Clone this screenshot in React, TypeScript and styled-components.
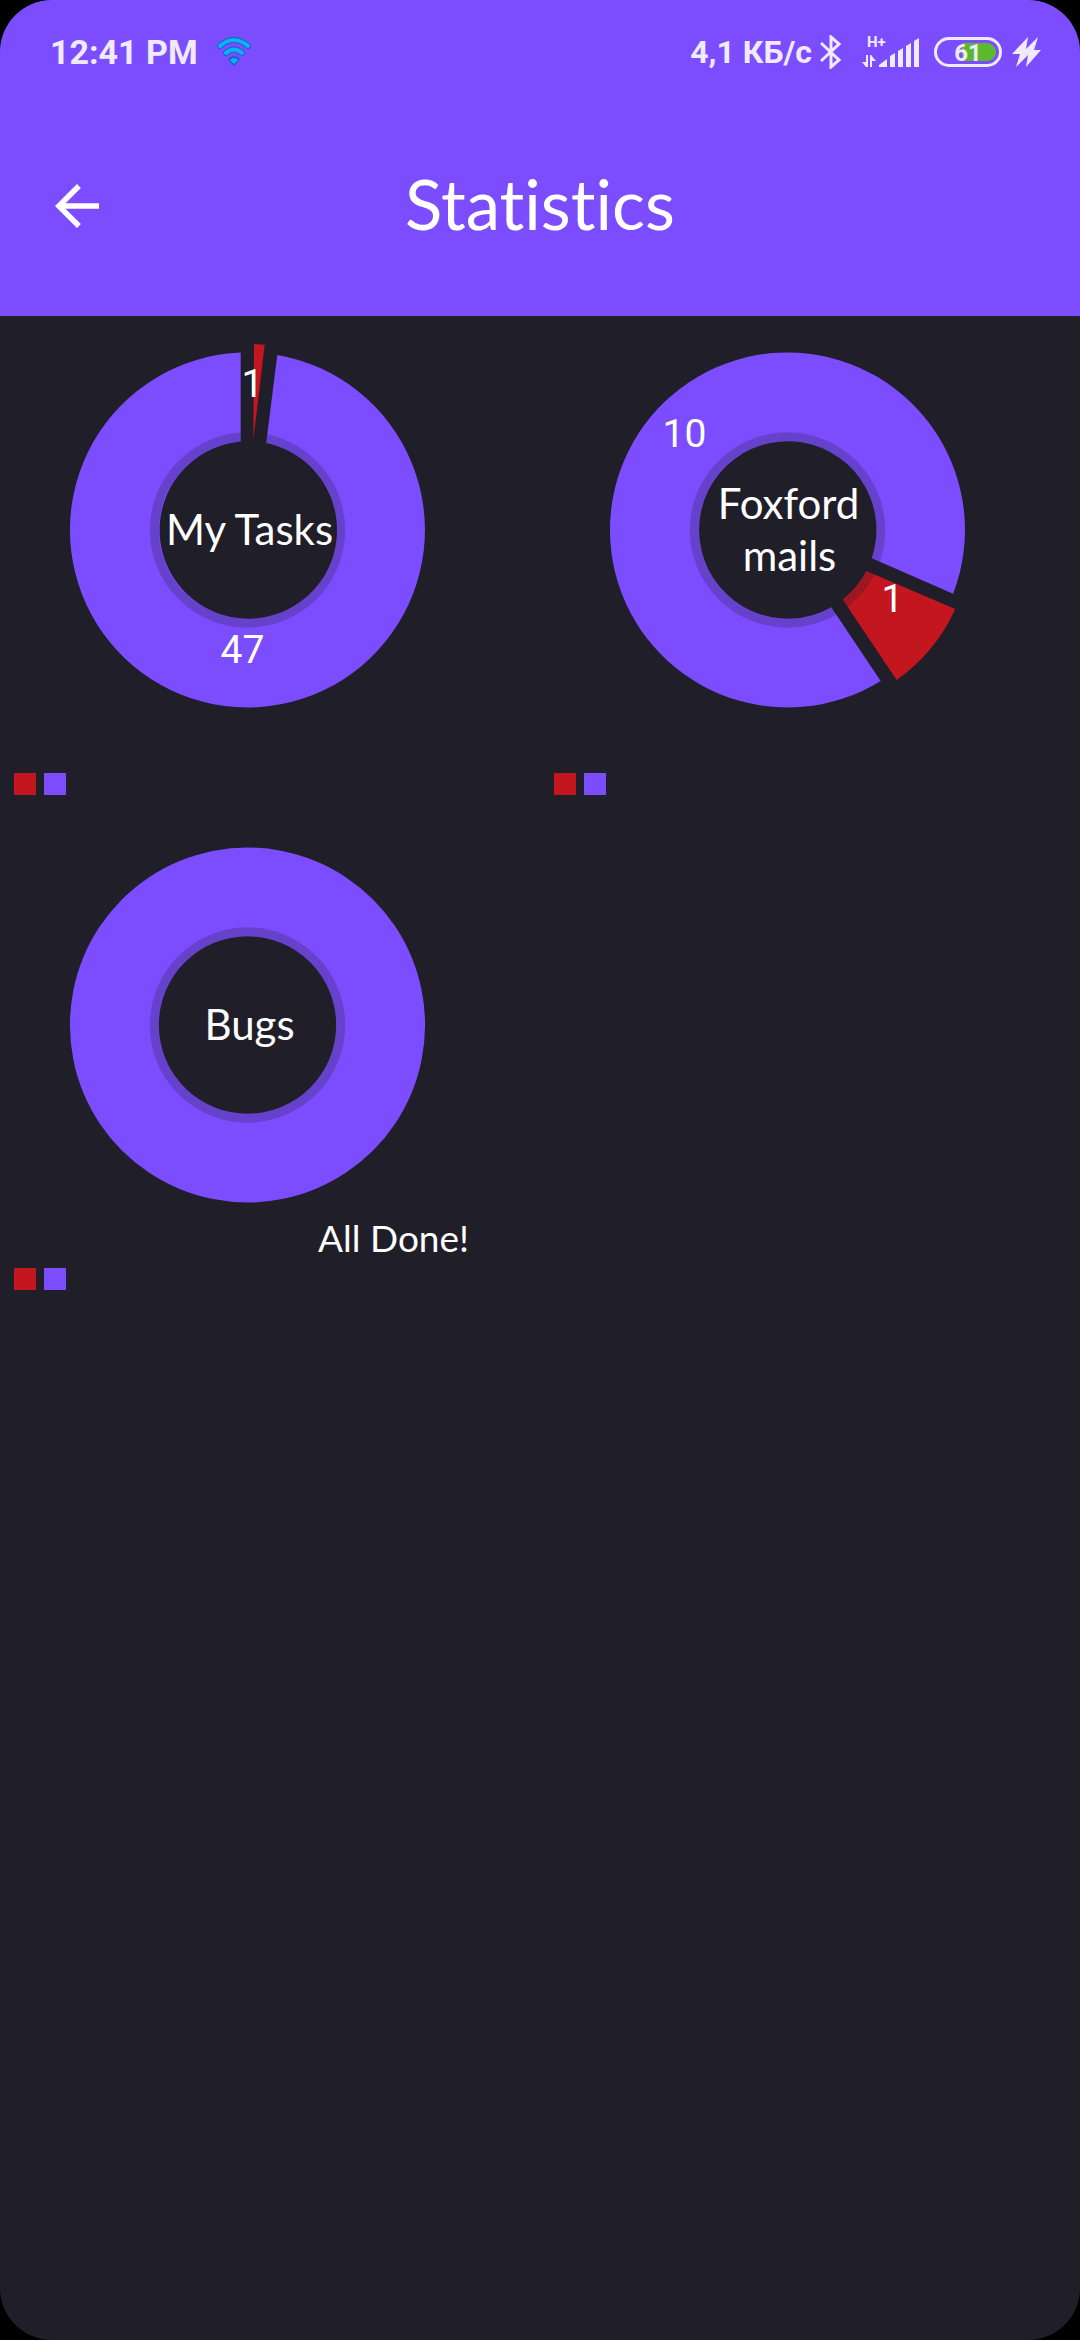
import React from "react";
import styled, { createGlobalStyle } from "styled-components";

const color = {
  accent: "#7c4dff",
  danger: "#c3161f",
  surface: "#201e28",
  text: "#ffffff",
  status: "#f0eaff",
};

const GlobalStyle = createGlobalStyle`
  *, *::before, *::after { box-sizing: border-box; }
  body {
    margin: 0;
    background: #000000;
    font-family: Lato, "Noto Sans", sans-serif;
    font-variant-ligatures: none;
    color: ${color.text};
  }
`;

const Screen = styled.div`
  display: flex;
  flex-direction: column;
  min-height: 100vh;
  border-radius: 52px;
  overflow: hidden;
  background: ${color.surface};
`;

const Header = styled.header`
  background: ${color.accent};
`;

const StatusBar = styled.div`
  display: flex;
  align-items: center;
  justify-content: space-between;
  height: 96px;
  padding: 8px 38px 0 50px;
  color: ${color.status};
  font-family: Roboto, sans-serif;
  font-weight: 700;
`;

const StatusGroup = styled.div<{ $gap: number }>`
  display: flex;
  align-items: center;
  gap: ${(p) => p.$gap}px;
`;

const StatusText = styled.span<{ $size: number }>`
  font-size: ${(p) => p.$size}px;
  line-height: 40px;
  white-space: nowrap;
`;

const Glyph = styled.svg`
  display: block;
  flex: none;
`;

const AppBar = styled.div`
  display: grid;
  grid-template-columns: 66px 1fr 66px;
  align-items: center;
  height: 220px;
  padding: 0 44px;
`;

const BackButton = styled.button`
  display: flex;
  padding: 0;
  border: 0;
  background: none;
  color: inherit;
  cursor: pointer;
`;

const Title = styled.h1`
  margin: 0;
  padding-bottom: 4px;
  font-size: 69px;
  line-height: 80px;
  font-weight: 400;
  text-align: center;
`;

const ChartGrid = styled.main`
  display: grid;
  grid-template-columns: repeat(2, minmax(0, 1fr));
`;

const ChartCard = styled.section`
  display: flex;
  flex-direction: column;
  align-items: flex-start;
  padding-bottom: 16px;
`;

const ChartSvg = styled.svg`
  display: block;
  width: 495px;
  max-width: 100%;
  height: auto;
`;

const CenterLabel = styled.text`
  fill: ${color.text};
  font-size: 42px;
  text-anchor: middle;
`;

const ValueLabel = styled.text`
  fill: ${color.text};
  font-family: Roboto, sans-serif;
  font-size: 39px;
  text-anchor: middle;
`;

const Description = styled.text`
  fill: ${color.text};
  font-size: 37px;
  text-anchor: end;
`;

const Legend = styled.div`
  display: flex;
  gap: 8px;
  padding-left: 14px;
`;

const Swatch = styled.span<{ $fill: string }>`
  width: 22px;
  height: 22px;
  background: ${(p) => p.$fill};
`;

type Slice = { path: string; fill: string };
type Label = { text: string; x: number; y: number };
type Chart = {
  name: string;
  lines: Label[];
  slices: Slice[];
  values: Label[];
  description?: string;
};

/* Slice paths are relative to the centre of the pie. */
const charts: Chart[] = [
  {
    name: "My Tasks",
    lines: [{ text: "My Tasks", x: 2, y: 15 }],
    slices: [
      {
        path: "M29.8-175A177.5 177.5 0 1 1-6.8-177.4V-88.4A88.7 88.7 0 1 0 18.7-86.9Z",
        fill: color.accent,
      },
      { path: "M6.5-186L17.2-185.3L5.8-90Z", fill: color.danger },
    ],
    values: [
      { text: "1", x: 5, y: -133 },
      { text: "47", x: -5, y: 133 },
    ],
  },
  {
    name: "Foxford mails",
    lines: [
      { text: "Foxford", x: 1, y: -11 },
      { text: "mails", x: 2, y: 41 },
    ],
    slices: [
      {
        path: "M93.2 151A177.5 177.5 0 1 1 165.6 63.8L84.3 28.2A88.7 88.7 0 1 0 43.8 77.2Z",
        fill: color.accent,
      },
      {
        path: "M167.8 79A177.5 177.5 0 0 1 109.2 150L55.2 69.4A88.7 88.7 0 0 0 78.8 41Z",
        fill: color.danger,
      },
    ],
    values: [
      { text: "10", x: -103, y: -83 },
      { text: "1", x: 105, y: 82 },
    ],
  },
  {
    name: "Bugs",
    lines: [{ text: "Bugs", x: 2, y: 15 }],
    slices: [
      {
        path: "M0-177.5A177.5 177.5 0 1 1 0 177.5A177.5 177.5 0 1 1 0-177.5ZM0-88.7A88.7 88.7 0 1 0 0 88.7A88.7 88.7 0 1 0 0-88.7Z",
        fill: color.accent,
      },
    ],
    values: [],
    description: "All Done!",
  },
];

function PieChart({ chart }: { chart: Chart }) {
  return (
    <ChartCard aria-label={chart.name}>
      <ChartSvg viewBox="0 0 495 457">
        <g transform="translate(247.5 214)">
          {chart.slices.map((s) => (
            <path key={s.path} d={s.path} fill={s.fill} />
          ))}
          <circle
            r="93.2"
            fill="none"
            stroke={color.surface}
            strokeOpacity="0.24"
            strokeWidth="9"
          />
          {chart.values.map((v) => (
            <ValueLabel key={v.text} x={v.x} y={v.y}>
              {v.text}
            </ValueLabel>
          ))}
          {chart.lines.map((l) => (
            <CenterLabel key={l.text} x={l.x} y={l.y}>
              {l.text}
            </CenterLabel>
          ))}
        </g>
        {chart.description && (
          <Description x="469" y="441">
            {chart.description}
          </Description>
        )}
      </ChartSvg>
      <Legend>
        <Swatch $fill={color.danger} />
        <Swatch $fill={color.accent} />
      </Legend>
    </ChartCard>
  );
}

function WifiIcon() {
  return (
    <Glyph width="36" height="30" viewBox="0 0 36 30" fill="none" strokeLinecap="round">
      <g stroke="#1763c6" strokeWidth="6">
        <path d="M4 9Q18-3 32 9" />
        <path d="M10 16Q18 9 26 16" />
      </g>
      <path d="M14 22Q18 19 22 22L18 27Z" fill="#1763c6" stroke="#1763c6" strokeWidth="3" />
      <g stroke="#0bb2f4" strokeWidth="4">
        <path d="M4 9Q18-3 32 9" />
        <path d="M10 16Q18 9 26 16" />
      </g>
      <path d="M14 23Q18 19 22 23L18 27Z" fill="#0bb2f4" />
    </Glyph>
  );
}

function BluetoothIcon() {
  return (
    <Glyph width="22" height="34" viewBox="0 0 22 34" fill="none" stroke="currentColor" strokeWidth="3">
      <path d="M1 8L19 25L11 32V2L19 9L1 26" />
    </Glyph>
  );
}

function SignalIcon() {
  return (
    <Glyph width="58" height="40" viewBox="0 -5 58 40" fill="currentColor">
      <text x="5" y="10" fontSize="15" fontWeight="700">
        H+
      </text>
      <path d="M4 18H6V30H4L0 25H4ZM8 30V18H9L14 24H10V30Z" />
      <path d="M17 30V28L25 22V30ZM28 30V19L33 16V30ZM36 30V14L41 11V30ZM44 30V9L49 6V30ZM52 30V4L57 1V30Z" />
    </Glyph>
  );
}

function BatteryIcon() {
  return (
    <Glyph width="68" height="30" viewBox="0 0 68 30">
      <rect x="1.500" y="1.500" width="65" height="27" rx="13.500" fill="none" stroke="currentColor" strokeWidth="3" />
      <path d="M28 6H53A9 9 0 0 1 53 24H28Z" fill="#5cb82c" />
      <text x="34" y="24" fontSize="24" fontFamily="Roboto, sans-serif" fontWeight="700" textAnchor="middle" fill="currentColor">
        61
      </text>
    </Glyph>
  );
}

function ChargeIcon() {
  return (
    <Glyph width="30" height="30" viewBox="0 0 30 30" fill="currentColor">
      <path d="M16 0L0 17H8L4 30L16 18L14 30L29 13H22L26 0L14 12Z" />
    </Glyph>
  );
}

export default function App() {
  return (
    <>
      <GlobalStyle />
      <Screen>
        <Header>
          <StatusBar>
            <StatusGroup $gap={18}>
              <StatusText $size={34}>12:41 PM</StatusText>
              <WifiIcon />
            </StatusGroup>
            <StatusGroup $gap={20}>
              <StatusGroup $gap={8}>
                <StatusText $size={32}>4,1 КБ/с</StatusText>
                <BluetoothIcon />
              </StatusGroup>
              <StatusGroup $gap={14}>
                <SignalIcon />
                <StatusGroup $gap={10}>
                  <BatteryIcon />
                  <ChargeIcon />
                </StatusGroup>
              </StatusGroup>
            </StatusGroup>
          </StatusBar>
          <AppBar>
            <BackButton type="button" aria-label="Back">
              <Glyph width="66" height="66" viewBox="0 0 24 24" fill="currentColor">
                <path d="M20 11H7.830l5.590-5.590L12 4l-8 8 8 8 1.410-1.410L7.830 13H20v-2z" />
              </Glyph>
            </BackButton>
            <Title>Statistics</Title>
          </AppBar>
        </Header>
        <ChartGrid>
          {charts.map((c) => (
            <PieChart key={c.name} chart={c} />
          ))}
        </ChartGrid>
      </Screen>
    </>
  );
}
